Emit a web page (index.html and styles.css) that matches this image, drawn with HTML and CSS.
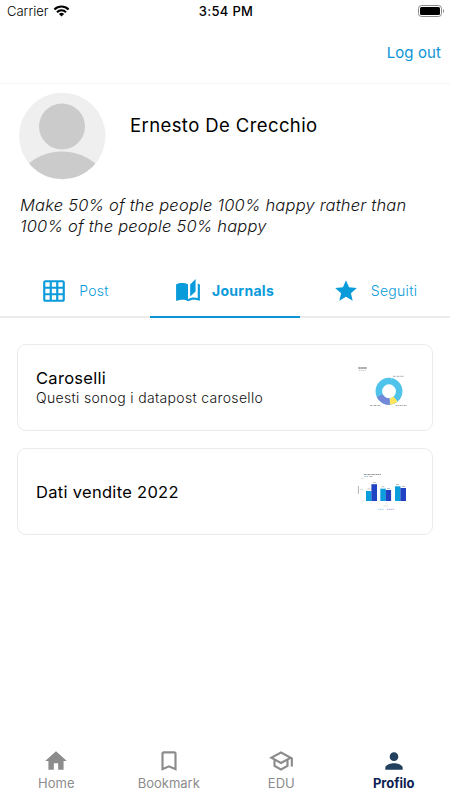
FILE: index.html
```html
<!DOCTYPE html>
<html lang="it">
    <head>
        <meta charset="UTF-8">
        <meta name="viewport" content="width=device-width, initial-scale=1.0">
        <title>Profilo</title>
        <link rel="stylesheet" href="styles.css">
    </head>
    <body>
        <div class="status-bar">
            <div class="carrier">
                <span>Carrier</span>
                <svg width="17" height="12" viewBox="0 0 16 12">
                    <path d="M.9 4.500a10 10 0 0 1 14.200 0M3.500 7.200a6.300 6.300 0 0 1 9 0" fill="none" stroke="#000" stroke-width="2.100"/>
                    <path d="M8 11.600L5.400 9a3.700 3.700 0 0 1 5.200 0z"/>
                </svg>
            </div>
            <div class="time">3:54 PM</div>
            <div class="battery">
                <svg width="27" height="12" viewBox="0 0 27 12">
                    <rect x="0.5" y="0.5" width="23" height="11" rx="3" fill="none" stroke="#8a8a8a"/>
                    <rect x="2" y="2" width="20" height="8" rx="1.5"/>
                    <path d="M25 4v4c1.400-.6 1.400-3.400 0-4z" fill="#8a8a8a"/>
                </svg>
            </div>
        </div>

        <header class="header">
            <a class="logout" href="#">Log out</a>
        </header>

        <section class="profile">
            <div class="user">
                <svg class="avatar" width="87" height="87" viewBox="0 0 87 87">
                    <clipPath id="avatarClip"><circle cx="43.300" cy="43" r="43.200"/></clipPath>
                    <g clip-path="url(#avatarClip)">
                        <rect width="87" height="87" fill="#efefef"/>
                        <circle cx="43" cy="33.500" r="23" fill="#cbcbcb"/>
                        <circle cx="43" cy="111" r="52.500" fill="#cbcbcb"/>
                    </g>
                </svg>
                <h1 class="name">Ernesto De Crecchio</h1>
            </div>
            <p class="bio">Make 50% of the people 100% happy rather than 100% of the people 50% happy</p>
        </section>

        <nav class="tabs">
            <a class="tab" href="#">
                <svg class="icon" viewBox="0 0 24 24"><path d="M20 2H4c-1.100 0-2 .9-2 2v16c0 1.100.9 2 2 2h16c1.100 0 2-.9 2-2V4c0-1.100-.9-2-2-2zM8 20H4v-4h4v4zm0-6H4v-4h4v4zm0-6H4V4h4v4zm6 12h-4v-4h4v4zm0-6h-4v-4h4v4zm0-6h-4V4h4v4zm6 12h-4v-4h4v4zm0-6h-4v-4h4v4zm0-6h-4V4h4v4z"/></svg>
                <span>Post</span>
            </a>
            <a class="tab active" href="#">
                <svg class="icon" viewBox="0 0 24 24"><path d="M19 1l-5 5v11l5-4.500V1zM1 6v14.650c0 .25.25.5.5.5.1 0 .15-.05.25-.05C3.100 20.450 5.050 20 6.500 20c1.950 0 4.050.4 5.500 1.500V6c-1.450-1.100-3.550-1.500-5.500-1.500S2.450 4.900 1 6zm22 13.500V6c-.6-.45-1.250-.75-2-1v13.500c-1.100-.35-2.300-.5-3.500-.5-1.700 0-4.150.65-5.500 1.500v2c1.350-.85 3.800-1.500 5.500-1.500 1.650 0 3.350.3 4.750 1.050.1.050.15.050.25.050.25 0 .5-.25.5-.5v-1.100z"/></svg>
                <span>Journals</span>
            </a>
            <a class="tab" href="#">
                <svg class="icon" viewBox="0 0 24 24"><path d="M12 17.270L18.180 21l-1.640-7.030L22 9.240l-7.190-.61L12 2 9.190 8.630 2 9.240l5.460 4.730L5.820 21z"/></svg>
                <span>Seguiti</span>
            </a>
        </nav>

        <main class="journals">
            <article class="card">
                <div class="card-text">
                    <h2>Caroselli</h2>
                    <p>Questi sonog i datapost carosello</p>
                </div>
                <svg class="thumb" viewBox="0 0 60 61">
                    <g fill="none" stroke-width="6.500">
                        <circle cx="33" cy="34.300" r="10.200" stroke="#4fc3ea"/>
                        <circle cx="33" cy="34.300" r="10.200" stroke="#ffe45c" pathLength="360" stroke-dasharray="36 324" transform="rotate(50 33 34.300)"/>
                        <circle cx="33" cy="34.300" r="10.200" stroke="#7488d8" pathLength="360" stroke-dasharray="69 291" transform="rotate(86 33 34.300)"/>
                    </g>
                    <g fill="none" stroke-width="1">
                        <path d="M2.300 11h8.700" stroke="#888" stroke-width="1.300" stroke-dasharray="2.500 .4"/>
                        <path d="M2.500 13.400h8" stroke="#ccc" stroke-dasharray="1.500 .5"/>
                        <path d="M37 19.300h11M14 48.500h11M39.500 48.500h11.500" stroke="#aaa" stroke-dasharray="2 .6 1 .5"/>
                        <path d="M35.500 20.500v2" stroke="#ddd" stroke-width=".6"/>
                    </g>
                </svg>
            </article>

            <article class="card">
                <div class="card-text">
                    <h2>Dati vendite 2022</h2>
                </div>
                <svg class="thumb" viewBox="0 0 60 61">
                    <g fill="#0a9fdc">
                        <rect x="10" y="30" width="5.500" height="10"/>
                        <rect x="24.300" y="27.700" width="5.500" height="12.300"/>
                        <rect x="39" y="25.300" width="5.500" height="14.700"/>
                    </g>
                    <g fill="#2242c4">
                        <rect x="15.400" y="23.200" width="5.600" height="16.800"/>
                        <rect x="29.700" y="29" width="5.400" height="11"/>
                        <rect x="44.400" y="27" width="5.600" height="13"/>
                    </g>
                    <g fill="none" stroke="#bbb" stroke-width=".9">
                        <path d="M8 13.500h17" stroke="#888" stroke-dasharray="2 .5 1 .4"/>
                        <path d="M8 15.500h4.500" stroke="#a5d5ee"/>
                        <path d="M13.500 15.500h3" stroke="#aaa"/>
                        <path d="M2.400 25v8" stroke="#aaa"/>
                        <path d="M11.500 28h3M17 21.500h3M25.500 25.800h3M31 27.500h3M40 23.500h3M46 25.500h3"/>
                        <path d="M4.500 17.700h3M4.500 28.500h3M5.500 40h2M15 42h1M30 42h1M43.500 42h1M27.500 45h5" stroke="#ddd"/>
                        <path d="M22 48.300h6" stroke="#9bcbe0" stroke-dasharray="1.500 .5"/>
                        <path d="M31 48.300h7" stroke="#a0a8d8" stroke-dasharray="1.500 .5"/>
                    </g>
                </svg>
            </article>
        </main>

        <nav class="bottom-nav">
            <a class="nav-item" href="#">
                <svg class="icon" viewBox="0 0 24 24"><path d="M10 20v-6h4v6h5v-8h3L12 3 2 12h3v8z"/></svg>
                <span>Home</span>
            </a>
            <a class="nav-item" href="#">
                <svg class="icon" viewBox="0 0 24 24"><path d="M17 3H7c-1.100 0-2 .9-2 2v16l7-3 7 3V5c0-1.100-.9-2-2-2zm0 15l-5-2.180L7 18V5h10v13z"/></svg>
                <span>Bookmark</span>
            </a>
            <a class="nav-item" href="#">
                <svg class="icon" viewBox="0 0 24 24"><path d="M12 3L1 9l4 2.180v6L12 21l7-3.820v-6l2-1.090V17h2V9L12 3zm6.820 6L12 12.720 5.180 9 12 5.280 18.820 9zM17 15.990l-5 2.730-5-2.730v-3.720L12 15l5-2.730v3.720z"/></svg>
                <span>EDU</span>
            </a>
            <a class="nav-item active" href="#">
                <svg class="icon" viewBox="0 0 24 24"><path d="M12 12c2.210 0 4-1.790 4-4s-1.790-4-4-4-4 1.790-4 4 1.790 4 4 4zm0 2c-2.670 0-8 1.340-8 4v2h16v-2c0-2.660-5.330-4-8-4z"/></svg>
                <span>Profilo</span>
            </a>
        </nav>
    </body>
</html>
```
FILE: styles.css
```css
* {
    box-sizing: border-box;
}

body {
    margin: 0;
    height: 800px;
    display: flex;
    flex-direction: column;
    background-color: #fff;
    color: #000;
    font-family: Inter, "Liberation Sans", sans-serif;
    overflow: hidden;
}

a {
    text-decoration: none;
}

h1, h2, p {
    margin: 0;
}

.icon {
    width: 26px;
    height: 26px;
    fill: currentColor;
}

.status-bar {
    display: grid;
    grid-template-columns: 1fr auto 1fr;
    align-items: center;
    height: 22px;
    padding: 0 5px 0 7px;
    font-size: 13px;
}

.carrier {
    display: flex;
    align-items: center;
    gap: 5px;
    font-weight: 300;
}

.time {
    font-weight: 500;
    letter-spacing: 0.3px;
}

.battery {
    display: flex;
    justify-content: flex-end;
}

.header {
    display: flex;
    justify-content: flex-end;
    align-items: center;
    height: 62px;
    padding-right: 9px;
    border-bottom: 1px solid #f4f4f4;
}

.logout {
    color: #0a94d6;
    font-size: 15px;
    letter-spacing: 0.1px;
}

.profile {
    height: 182px;
    padding: 9px 19px 0;
}

.user {
    display: flex;
    gap: 24px;
}

.name {
    padding-top: 20px;
    font-size: 18.500px;
    line-height: 24px;
    font-weight: 400;
    letter-spacing: 0.4px;
}

.bio {
    margin-top: 15px;
    padding-left: 1px;
    font-size: 16.500px;
    line-height: 21px;
    font-weight: 300;
    font-style: italic;
    letter-spacing: 0.2px;
    color: #111;
}

.tabs {
    display: grid;
    grid-template-columns: repeat(3, 1fr);
    height: 52px;
}

.tab {
    display: flex;
    justify-content: center;
    align-items: center;
    gap: 12px;
    border-bottom: 2px solid #ececec;
    color: #0a9bdb;
    font-size: 14px;
    line-height: 16px;
    font-weight: 300;
    letter-spacing: 0.3px;
}

.tab span {
    padding-bottom: 1px;
}

.tab.active {
    gap: 11px;
    padding-right: 1px;
    border-color: #0a94d6;
    font-weight: 700;
}

.journals {
    flex: 1;
    display: flex;
    flex-direction: column;
    gap: 17px;
    padding: 26px 17px 0;
}

.card {
    display: flex;
    justify-content: space-between;
    align-items: center;
    height: 87px;
    padding: 0 16px 0 18px;
    border: 1px solid #ebebeb;
    border-radius: 9px;
}

.card h2 {
    font-size: 16.500px;
    line-height: 20px;
    font-weight: 400;
    letter-spacing: 0.3px;
}

.card p {
    font-size: 14px;
    line-height: 19px;
    font-weight: 300;
    color: #111;
    letter-spacing: 0.33px;
}

.thumb {
    width: 60px;
    height: 61px;
}

.bottom-nav {
    display: grid;
    grid-template-columns: repeat(4, 1fr);
    height: 52px;
}

.nav-item {
    display: flex;
    flex-direction: column;
    align-items: center;
    color: #8c8c8c;
    font-size: 13px;
    line-height: 18px;
}

.nav-item.active {
    color: #0f1f52;
    font-weight: 700;
}

.nav-item.active .icon {
    color: #23405f;
}
```
